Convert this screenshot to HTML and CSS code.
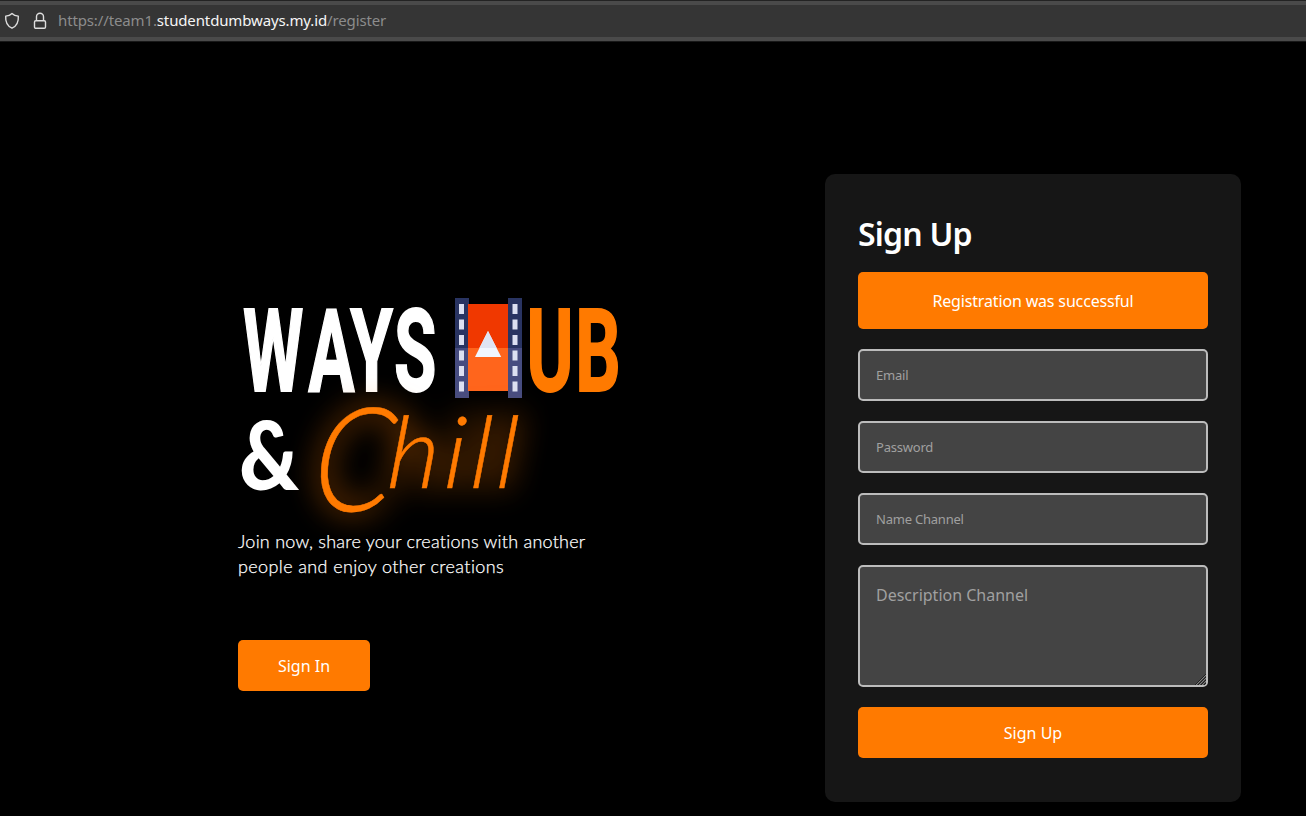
FILE: index.html
```html
<!DOCTYPE html>
<html lang="en">
<head>
<meta charset="utf-8">
<title>WaysHub - Register</title>
<link rel="stylesheet" href="styles.css">
</head>
<body>
<header class="urlbar">
  <svg class="shield" width="16" height="18" viewBox="0 0 16 18"><path d="M8 1.500C6.500 3 4.200 3.900 1.700 4.100 1.300 9.500 3.200 14 8 16.200 12.800 14 14.700 9.500 14.300 4.100 11.800 3.900 9.500 3 8 1.500Z"/></svg>
  <svg class="lock" width="14" height="18" viewBox="0 0 14 18"><path d="M3.500 8.500V4.800a3.500 3.500 0 0 1 7 0V8.500"/><rect x="1.500" y="8.700" width="11" height="7.600" rx="1.300"/></svg>
  <div class="url"><span class="url-pre">https://team1.</span><span class="host">studentdumbways.my.id</span><span class="url-path">/register</span></div>
</header>
<main class="page">
  <section class="intro">
    <svg class="logo" width="400" height="240" viewBox="0 0 400 240">
      <defs>
        <filter id="glow" x="-50%" y="-50%" width="200%" height="200%"><feGaussianBlur stdDeviation="15"/></filter>
      </defs>
      <g class="block">
        <text class="ways" transform="translate(0 100.500) scale(.6 1)" x="8.500 117 187 260">WAYS</text>
        <text class="ub" transform="translate(0 100.500) scale(.62 1)" x="465.500 544">UB</text>
      </g>
      <g>
        <rect class="reel" x="217" y="8" width="14" height="50"/><rect class="reel-low" x="217" y="58" width="14" height="50"/>
        <rect class="reel" x="270" y="8" width="14" height="50"/><rect class="reel-low" x="270" y="58" width="14" height="50"/>
        <rect class="frame" x="230" y="14" width="40" height="44"/><rect class="frame-low" x="230" y="58" width="40" height="43"/>
        <path class="holes" d="M223.500 14V104M277 14V104"/>
        <path class="play" d="M250 41 263.200 67H237Z"/>
        <path class="play-top" d="M250 41 258.600 58H241.400Z"/>
      </g>
      <text class="amp" transform="translate(1 200) scale(.86 1)">&amp;</text>
      <g class="script glow" filter="url(#glow)"><text class="cap" transform="translate(72 221) skewX(-5) scale(.88 1)">C</text><text class="rest" transform="translate(148 198) skewX(-4)" textLength="130">hill</text></g>
      <g class="script"><text class="cap" transform="translate(72 221) skewX(-5) scale(.88 1)">C</text><text class="rest" transform="translate(148 198) skewX(-4)" textLength="130">hill</text></g>
    </svg>
    <p class="tagline"><span>Join now, share your creations with another</span><br><span class="second">people and enjoy other creations</span></p>
    <button class="btn signin">Sign In</button>
  </section>
  <form class="card">
    <h1>Sign Up</h1>
    <div class="alert"><span>Registration was successful</span></div>
    <input class="field" type="email" placeholder="Email">
    <input class="field password" type="password" placeholder="Password">
    <input class="field name" type="text" placeholder="Name Channel">
    <div class="area-wrap">
      <textarea class="field area" placeholder="Description Channel"></textarea>
      <svg class="grip" width="11" height="11" viewBox="0 0 11 11"><path class="grip-light" d="M1 11 11 1M4 11l7-7M7 11l4-4M10 11l1-1"/><path class="grip-dark" d="M0 11 11 0M3 11l8-8M6 11l5-5M9 11l2-2"/></svg>
    </div>
    <button type="button" class="btn submit">Sign Up</button>
  </form>
</main>
</body>
</html>
```
FILE: styles.css
```css
*{box-sizing:border-box}
body{margin:0;height:816px;overflow:hidden;background:#000;color:#fff;font-family:"Noto Sans",sans-serif}
.urlbar{height:42px;display:flex;align-items:center;padding:0 4px;background:#353535;border-top:1px solid #232323;border-bottom:1px solid #181818;box-shadow:inset 0 4px #4a4a4a,inset 0 -4px #4a4a4a}
.urlbar svg{fill:none;stroke:#dedede;stroke-width:1.4;stroke-linejoin:round}
.lock{margin-left:13px}
.url{margin:-2px 0 0 11px;font-size:15px;line-height:20px;letter-spacing:-.13px;color:#8c8c8c;white-space:nowrap}
.host{color:#f5f5f5}
.page{height:774px;display:flex;justify-content:space-between;align-items:flex-start;padding:132px 65px 0 238px}
.intro{width:400px;padding-top:116px}
.logo{display:block;overflow:visible}
.block text{font:700 115px Roboto,sans-serif;stroke-width:1.8;paint-order:stroke}
.ways,.amp{fill:#fff}
.ways{stroke:#fff}
.ub{fill:#ff7a00;stroke:#ff7a00}
.reel{fill:#293462}
.reel-low{fill:#464c80}
.frame{fill:#f03800}
.frame-low{fill:#ff651c}
.holes{stroke:#dce0f2;stroke-width:5;stroke-dasharray:10 5.500}
.play{fill:#f0f6ff}
.play-top{fill:#dfe4f3}
.amp{font:900 96px Lato,sans-serif}
.script{fill:#ff7a00;stroke:#ff7a00;stroke-width:.5;font-family:Lato,sans-serif;font-style:italic;font-weight:300}
.cap{font-size:145px}
.rest{font-size:100px}
.glow{opacity:.65;stroke-width:3}
.tagline{margin:-1px 0 0;font:300 18px/25px Lato,sans-serif;letter-spacing:.24px;font-variant-ligatures:none;white-space:nowrap;-webkit-text-stroke:.25px #fff}
.second{letter-spacing:.38px}
.btn{display:block;height:51px;border:0;border-radius:5px;background:#ff7a00;color:#fff;font:16px "Noto Sans",sans-serif}
.signin{width:132px;margin-top:61px}
.card{width:416px;height:628px;padding:33px;border-radius:10px;background:#161616;display:flex;flex-direction:column}
h1{margin:4px 0 15px;font-size:32px;line-height:46px;font-weight:600;letter-spacing:-.8px}
.alert{height:57px;flex:none;border-radius:5px;background:#ff7a00;display:flex;align-items:center;justify-content:center;font-size:16px;letter-spacing:-.16px}
.field{display:block;width:350px;height:52px;flex:none;margin:20px 0 0;padding:0 16px;border:2px solid #bcbcbc;border-radius:5px;background:#444;color:#fff;font:13px "Noto Sans",sans-serif;letter-spacing:-.22px}
.field::placeholder{color:#a0a0a0;opacity:1}
.area-wrap{position:relative;flex:none}
.area{height:122px;padding:17px 16px;font-size:16px;line-height:22px;letter-spacing:0;resize:none}
.grip{position:absolute;right:2px;bottom:2px;fill:none}
.grip-light{stroke:#909090;stroke-width:.8}
.grip-dark{stroke:#202020;stroke-width:1}
.submit{width:350px;margin-top:20px;flex:none}
```
